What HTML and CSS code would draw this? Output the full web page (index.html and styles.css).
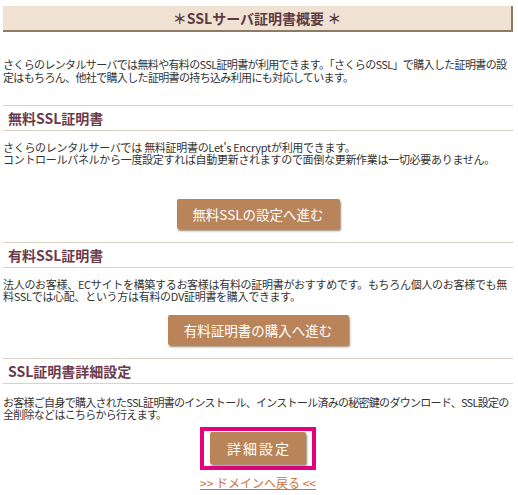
FILE: index.html
```html
<!DOCTYPE html>
<html lang="ja">
<head>
    <meta charset="UTF-8">
    <title>SSLサーバ証明書概要</title>
    <link rel="stylesheet" href="styles.css">
</head>
<body>
    <div class="page">
        <!-- Title -->
        <h1 class="title">＊SSLサーバ証明書概要 ＊</h1>
        <p class="lead">さくらのレンタルサーバでは無料や有料のSSL証明書が利用できます。「さくらのSSL」で購入した証明書の設定はもちろん、他社で購入した証明書の持ち込み利用にも対応しています。</p>

        <!-- Free SSL -->
        <section class="block block-free">
            <h2 class="block-head">無料SSL証明書</h2>
            <p class="text">さくらのレンタルサーバでは 無料証明書のLet's Encryptが利用できます。<br>コントロールパネルから一度設定すれば自動更新されますので面倒な更新作業は一切必要ありません。</p>
            <div class="actions">
                <a href="#" class="btn btn-free">無料SSLの設定へ進む</a>
            </div>
        </section>

        <!-- Paid SSL -->
        <section class="block block-paid">
            <h2 class="block-head">有料SSL証明書</h2>
            <p class="text">法人のお客様、ECサイトを構築するお客様は有料の証明書がおすすめです。もちろん個人のお客様でも無料SSLでは心配、という方は有料のDV証明書を購入できます。</p>
            <div class="actions">
                <a href="#" class="btn btn-paid">有料証明書の購入へ進む</a>
            </div>
        </section>

        <!-- Detail settings -->
        <section class="block block-detail">
            <h2 class="block-head">SSL証明書詳細設定</h2>
            <p class="text text-tight">お客様ご自身で購入されたSSL証明書のインストール、インストール済みの秘密鍵のダウンロード、SSL設定の全削除などはこちらから行えます。</p>
            <div class="actions">
                <div class="highlight">
                    <a href="#" class="btn btn-detail">詳細設定</a>
                </div>
            </div>
            <div class="back">
                <a href="#">&gt;&gt; ドメインへ戻る &lt;&lt;</a>
            </div>
        </section>
    </div>
</body>
</html>
```

FILE: styles.css
```css
/* General */
* {
    margin: 0;
    padding: 0;
    box-sizing: border-box;
}

body {
    font-family: "Noto Sans CJK JP", "Liberation Sans", sans-serif;
    background-color: #fff;
    color: #333;
    font-size: 11px;
}

.page {
    width: 510px;
    margin: 6px 0 0 3px;
}

/* Title bar */
.title {
    height: 26px;
    background-color: #f0e2d3;
    border-right: 2px solid #8d7b64;
    border-bottom: 2px solid #8d7b64;
    color: #5e3a40;
    font-size: 14px;
    font-weight: bold;
    line-height: 24px;
    text-align: center;
}

.lead, .text {
    line-height: 12px;
    letter-spacing: -0.3px;
}

.lead {
    margin-top: 26px;
    line-height: 13px;
    letter-spacing: -0.65px;
}

.text-tight {
    letter-spacing: -0.72px;
}

/* Sections */
.block-head {
    border-top: 1px solid #ddd1c1;
    border-bottom: 1px solid #ddd1c1;
    height: 26px;
    padding-left: 5px;
    color: #6b3b4c;
    font-size: 14px;
    font-weight: bold;
    line-height: 24px;
}

.block-free {
    margin-top: 21px;
}

.block-paid {
    margin-top: 13px;
}

.block-detail {
    margin-top: 13px;
}

.block .text {
    margin-top: 10px;
}

.block-detail .text {
    margin-top: 12px;
}

.actions {
    display: flex;
    justify-content: center;
}

.block-free .actions {
    margin-top: 34px;
}

.block-paid .actions {
    margin-top: 13px;
}

.block-detail .actions {
    margin-top: 7px;
}

/* Buttons */
.btn {
    display: block;
    height: 30px;
    background-color: #b9845a;
    border-radius: 2px;
    box-shadow: 1px 2px 2px rgba(90, 60, 30, 0.6);
    color: #fff;
    font-size: 13.5px;
    line-height: 30px;
    text-align: center;
    text-decoration: none;
}

.btn-free {
    width: 163px;
}

.btn-paid {
    width: 181px;
}

.btn-detail {
    width: 96px;
    height: 32px;
    padding-left: 2px;
    line-height: 32px;
    font-size: 14px;
    letter-spacing: 2px;
}

.highlight {
    border: 4px solid #e4007f;
    padding: 1px 6px 2px 6px;
}

/* Back link */
.back {
    margin-top: 5px;
    text-align: center;
    line-height: 16px;
}

.back a {
    color: #c8743c;
    font-size: 12px;
}
```
